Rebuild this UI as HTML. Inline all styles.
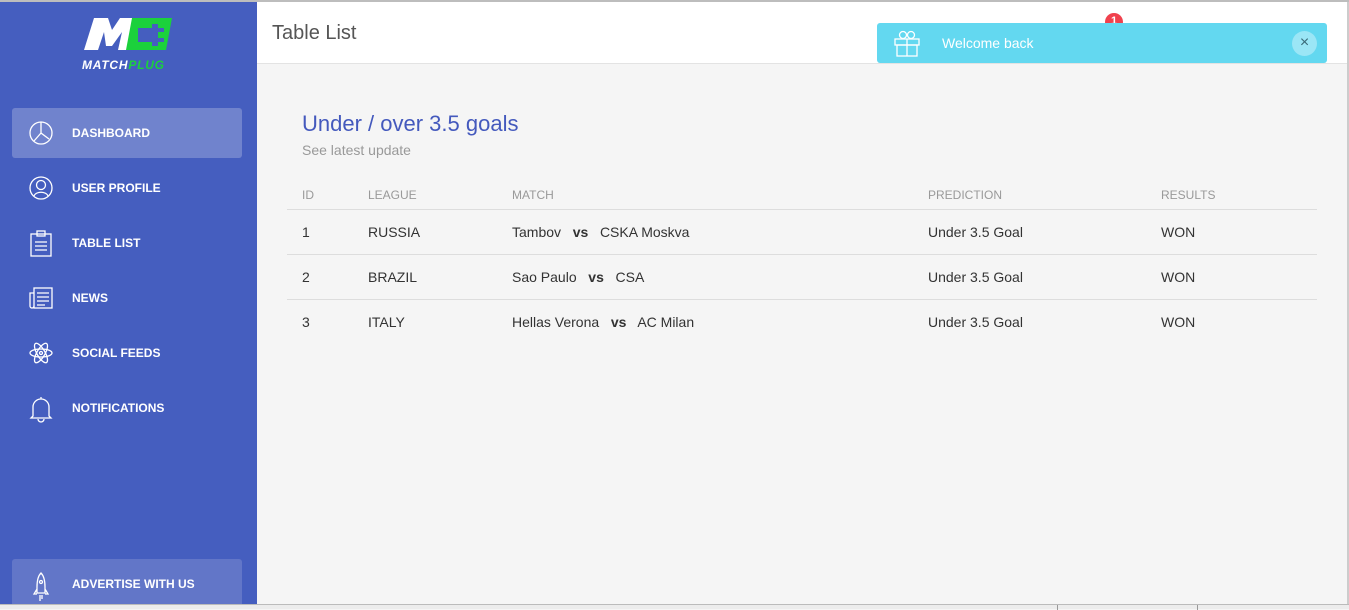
<!DOCTYPE html>
<html><head><meta charset="utf-8"><style>
*{margin:0;padding:0;box-sizing:border-box}
body{width:1349px;height:609px;overflow:hidden;background:#f5f5f5;font-family:"Liberation Sans",sans-serif;position:relative}
.topline{position:absolute;left:0;top:0;width:1349px;height:2px;background:#bdbdbd;z-index:5}
.side{position:absolute;left:0;top:2px;width:257px;height:602px;background:#455ebf}
.hdr{position:absolute;left:257px;top:2px;width:1090px;height:62px;background:#fff;border-bottom:1px solid #e3e3e3}
.hdr h1{position:absolute;left:15px;top:20px;font-size:20px;font-weight:normal;color:#555}
.rline{position:absolute;left:1347px;top:0;width:2px;height:609px;background:#ccc}
.bot{position:absolute;left:0;top:604px;width:1349px;height:5px;background:#ececec;border-top:1px solid #bbb}
.item{position:absolute;left:12px;width:230px;height:50px;border-radius:3px;color:#fff;font-size:12px;font-weight:bold}
.item span{position:absolute;left:60px;top:18px}
.item svg{position:absolute;left:16px;top:12px}
.toast{position:absolute;left:877px;top:23px;width:450px;height:40px;background:#63d8f0;border-radius:3px;color:#fff;font-size:14px}
.badge{position:absolute;left:1105px;top:13px;width:18px;height:18px;border-radius:9px;background:#f0414d;color:#fff;font-size:11px;font-weight:bold;text-align:center;line-height:16px}
.t{position:absolute;font-size:14px;color:#333}
.th{position:absolute;font-size:12px;color:#999;top:188px}
.hl{position:absolute;left:287px;width:1030px;height:1px;background:#ddd}
</style></head><body>
<div class="topline"></div>
<div class="side">
<svg style="position:absolute;left:82px;top:14px" width="92" height="56" viewBox="0 0 92 56">
<polygon points="12,2 26,2 30,14 38,2 52,2 46,34 36,34 40,16 30,30 24,30 22,16 16,34 2,34" fill="#fff"/>
<polygon points="50,2 90,2 84,34 44,34" fill="#1bd13c"/>
<path d="M56 12h14v-4h6v4h6v4h-6v6h6v4h-6v4h-6v-4h-14z" fill="#455ebf"/>
<text x="0" y="53" font-family="Liberation Sans" font-weight="bold" font-style="italic" font-size="12" textLength="82" fill="#fff">MATCH<tspan fill="#1bd13c">PLUG</tspan></text>
</svg>
<div class="item" style="top:106px;background:#7083cd"><svg width="26" height="26" fill="none" stroke="#fff" stroke-width="1.3"><circle cx="13" cy="13" r="11"/><path d="M13 2v11l8 6M13 13l-7 8"/></svg><span>DASHBOARD</span></div>
<div class="item" style="top:161px"><svg width="26" height="26" fill="none" stroke="#fff" stroke-width="1.3"><circle cx="13" cy="13" r="11"/><circle cx="13" cy="10" r="4.5"/><path d="M6 21c2-5 12-5 14 0"/></svg><span>USER PROFILE</span></div>
<div class="item" style="top:216px"><svg width="26" height="28" fill="none" stroke="#fff" stroke-width="1.3"><rect x="3" y="4" width="20" height="22"/><rect x="9" y="1" width="8" height="5"/><path d="M7 12h12M7 16h12M7 20h12"/></svg><span>TABLE LIST</span></div>
<div class="item" style="top:271px"><svg width="26" height="26" fill="none" stroke="#fff" stroke-width="1.3"><rect x="6" y="3" width="18" height="20"/><path d="M6 8H2v13a2 2 0 004 0M9 8h12M9 12h12M9 16h12M9 20h8"/></svg><span>NEWS</span></div>
<div class="item" style="top:326px"><svg width="26" height="26" fill="none" stroke="#fff" stroke-width="1.3"><ellipse cx="13" cy="13" rx="11" ry="4"/><ellipse cx="13" cy="13" rx="11" ry="4" transform="rotate(60 13 13)"/><ellipse cx="13" cy="13" rx="11" ry="4" transform="rotate(-60 13 13)"/><circle cx="13" cy="13" r="1.5"/></svg><span>SOCIAL FEEDS</span></div>
<div class="item" style="top:381px"><svg width="26" height="28" fill="none" stroke="#fff" stroke-width="1.3"><path d="M5 21V12a8 8 0 0116 0v9l2 2H3zM10 24a3 3 0 006 0M13 2v2"/></svg><span>NOTIFICATIONS</span></div>
<div class="item" style="top:557px;background:#6276c8"><svg width="26" height="32" fill="none" stroke="#fff" stroke-width="1.3"><path d="M13 2c-3 3-4 8-4 14v6h8v-6c0-6-1-11-4-14zM9 18l-3 5h3M17 18l3 5h-3M12 24v6M14 24v4"/><circle cx="13" cy="11" r="1.5"/></svg><span>ADVERTISE WITH US</span></div>
</div>
<div class="hdr"><h1>Table List</h1></div>
<div class="badge">1</div>
<div class="toast">
<svg style="position:absolute;left:16px;top:6px" width="28" height="28" fill="none" stroke="#fff" stroke-width="1.3"><rect x="2" y="10" width="24" height="6"/><rect x="4" y="16" width="20" height="11"/><path d="M14 10v17"/><circle cx="10" cy="6" r="3.5"/><circle cx="18" cy="6" r="3.5"/></svg>
<span style="position:absolute;left:65px;top:12px">Welcome back</span>
<div style="position:absolute;left:415px;top:8px;width:25px;height:25px;border-radius:13px;background:#9be6f6;color:#3a6a78;text-align:center;line-height:24px;font-size:16px">×</div>
</div>
<div style="position:absolute;left:302px;top:111px;font-size:22px;color:#4459bd">Under / over 3.5 goals</div>
<div style="position:absolute;left:302px;top:142px;font-size:14px;color:#999">See latest update</div>
<div class="th" style="left:302px">ID</div><div class="th" style="left:368px">LEAGUE</div><div class="th" style="left:512px">MATCH</div><div class="th" style="left:928px">PREDICTION</div><div class="th" style="left:1161px">RESULTS</div>
<div class="hl" style="top:209px"></div><div class="hl" style="top:254px"></div><div class="hl" style="top:299px"></div>
<div class="t" style="left:302px;top:224px">1</div><div class="t" style="left:368px;top:224px">RUSSIA</div><div class="t" style="left:512px;top:224px">Tambov &nbsp;&nbsp;<b>vs</b>&nbsp;&nbsp; CSKA Moskva</div><div class="t" style="left:928px;top:224px">Under 3.5 Goal</div><div class="t" style="left:1161px;top:224px">WON</div>
<div class="t" style="left:302px;top:269px">2</div><div class="t" style="left:368px;top:269px">BRAZIL</div><div class="t" style="left:512px;top:269px">Sao Paulo &nbsp;&nbsp;<b>vs</b>&nbsp;&nbsp; CSA</div><div class="t" style="left:928px;top:269px">Under 3.5 Goal</div><div class="t" style="left:1161px;top:269px">WON</div>
<div class="t" style="left:302px;top:314px">3</div><div class="t" style="left:368px;top:314px">ITALY</div><div class="t" style="left:512px;top:314px">Hellas Verona &nbsp;&nbsp;<b>vs</b>&nbsp;&nbsp; AC Milan</div><div class="t" style="left:928px;top:314px">Under 3.5 Goal</div><div class="t" style="left:1161px;top:314px">WON</div>
<div class="rline"></div>
<div class="bot"><div style="position:absolute;left:1057px;top:0;width:1px;height:5px;background:#999"></div><div style="position:absolute;left:1197px;top:0;width:1px;height:5px;background:#999"></div></div>
</body></html>
